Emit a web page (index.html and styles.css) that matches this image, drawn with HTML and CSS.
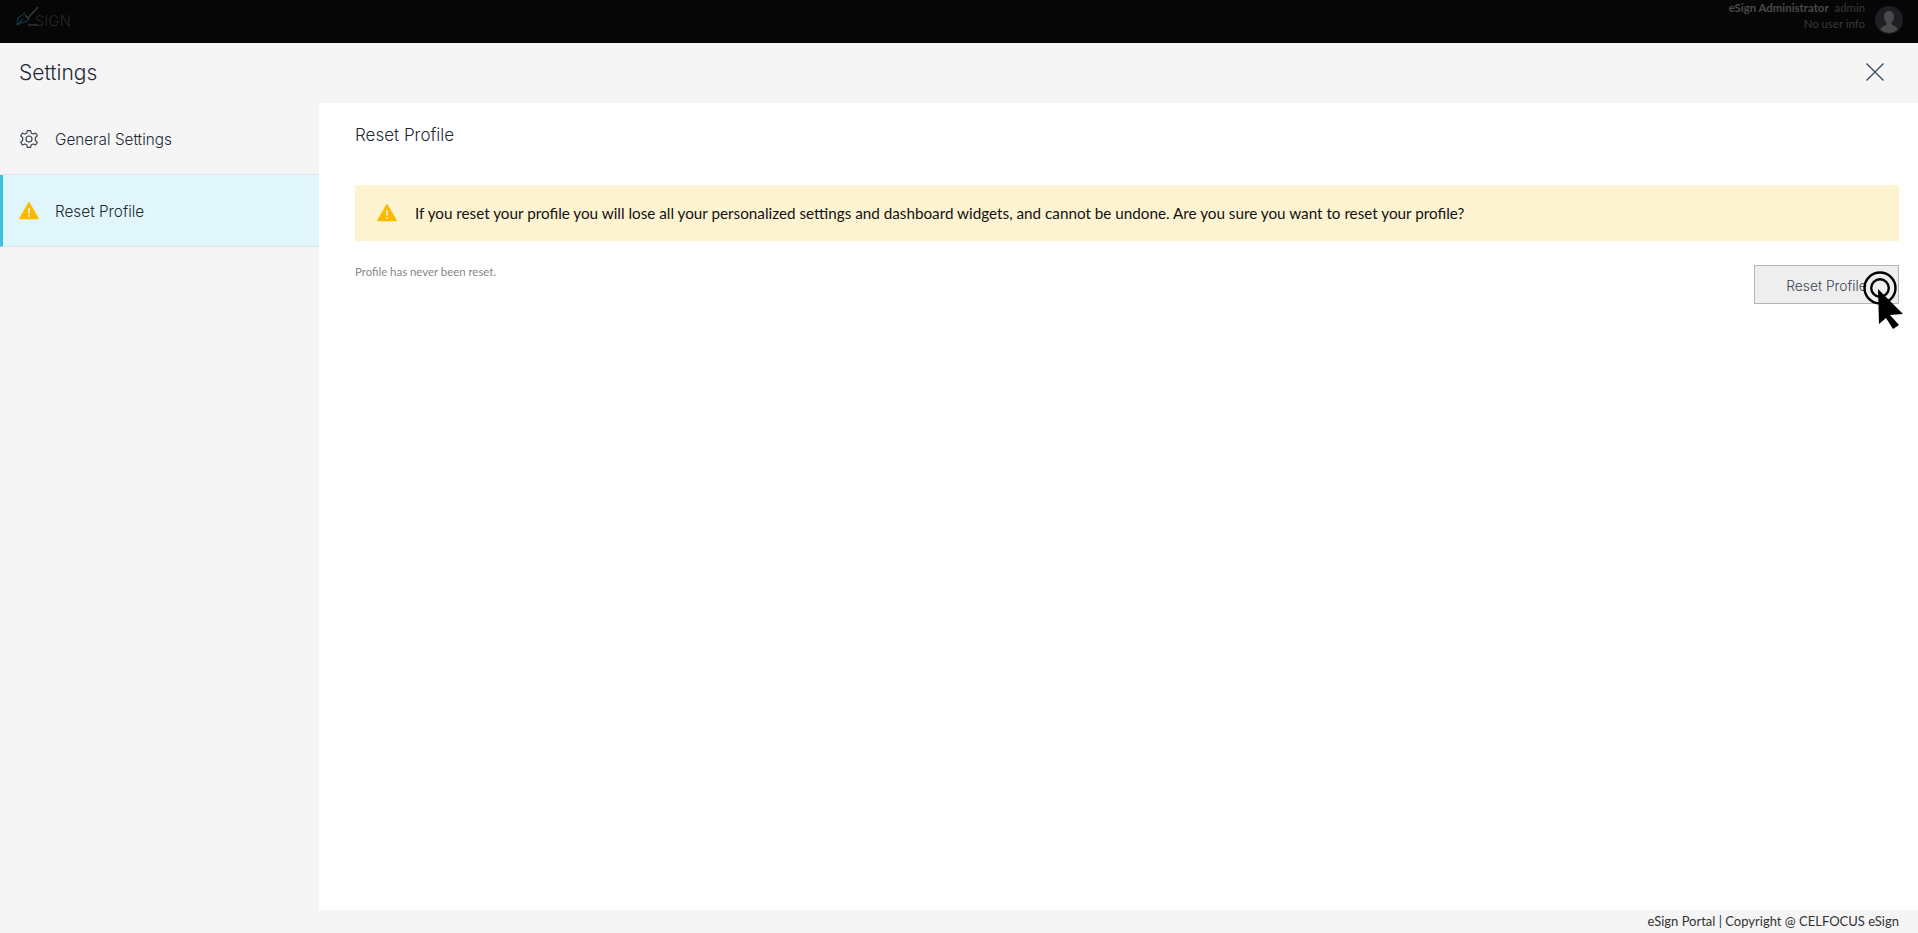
FILE: index.html
```html
<!DOCTYPE html>
<html lang="en">
<head>
    <meta charset="UTF-8">
    <title>Settings</title>
    <link rel="stylesheet" href="styles.css">
</head>
<body>
    <header class="topbar">
        <div class="logo">
            <svg class="logo-mark" width="24" height="22" viewBox="0 0 24 22" fill="none">
                <path d="M2 20 L3 13 L10 8 M2 20 L12 16 L14 13 M2 20 L8 14" stroke="#0f3a45" stroke-width="1.3"/>
                <path d="M10 10 L13 13 L23 2" stroke="#3a3a3a" stroke-width="1.3"/>
                <path d="M13 20 H22" stroke="#3a3a3a" stroke-width="1.3"/>
            </svg>
            <span class="logo-text">SIGN</span>
        </div>
        <div class="user">
            <div class="user-info">
                <div><b>eSign Administrator</b>&nbsp; admin</div>
                <div>No user info</div>
            </div>
            <div class="avatar">
                <svg width="28" height="28" viewBox="0 0 28 28">
                    <circle cx="14" cy="14" r="14" fill="#1e1f22"/>
                    <path d="M14 5 C10.5 5 9 7.5 9 10.5 C9 13.5 10.5 15.5 11.5 16.5 L11.5 18.5 C9.5 20 6 20 5.5 24 A14 14 0 0 0 22.5 24 C22 20 18.5 20 16.5 18.5 L16.5 16.5 C17.5 15.5 19 13.5 19 10.5 C19 7.5 17.5 5 14 5 Z" fill="#4a4a4c"/>
                </svg>
            </div>
        </div>
    </header>

    <div class="settings-head">
        <h1>Settings</h1>
        <svg class="close" width="18" height="18" viewBox="0 0 18 18" fill="none">
            <path d="M0.5 0.5 L17.5 17.5 M17.5 0.5 L0.5 17.5" stroke="#33475b" stroke-width="1.2"/>
        </svg>
    </div>

    <div class="main">
        <nav class="sidebar">
            <a class="nav-item">
                <svg class="nav-icon" width="20" height="20" viewBox="0 0 24 24" fill="none" stroke="#3a4450" stroke-width="1.4" stroke-linejoin="round">
                    <circle cx="12" cy="12" r="3.6"/>
                    <path d="M10 2 H14 L14.7 5 L17.1 6.1 L19.9 4.8 L22 8.2 L19.6 10.2 V13.8 L22 15.8 L19.9 19.2 L17.1 17.9 L14.7 19 L14 22 H10 L9.3 19 L6.9 17.9 L4.1 19.2 L2 15.8 L4.4 13.8 V10.2 L2 8.2 L4.1 4.8 L6.9 6.1 L9.3 5 Z"/>
                </svg>
                <span class="nav-label">General Settings</span>
            </a>
            <a class="nav-item active">
                <svg class="nav-icon" width="20" height="18" viewBox="0 0 20 18">
                    <path d="M10 1 L19 16.5 H1 Z" fill="#fdb900" stroke="#fdb900" stroke-width="1.5" stroke-linejoin="round"/>
                    <path d="M10 6 V11.5 M10 13 V14.8" stroke="#fff" stroke-width="1.5"/>
                </svg>
                <span class="nav-label">Reset Profile</span>
            </a>
        </nav>

        <section class="content">
            <h2>Reset Profile</h2>
            <div class="warning">
                <svg width="20" height="18" viewBox="0 0 20 18">
                    <path d="M10 1 L19 16.5 H1 Z" fill="#fdb900" stroke="#fdb900" stroke-width="1.5" stroke-linejoin="round"/>
                    <path d="M10 6 V11.5 M10 13 V14.8" stroke="#fff" stroke-width="1.5"/>
                </svg>
                <span>If you reset your profile you will lose all your personalized settings and dashboard widgets, and cannot be undone. Are you sure you want to reset your profile?</span>
            </div>
            <div class="actions">
                <p class="note">Profile has never been reset.</p>
                <div class="button-wrap">
                    <button class="reset-btn">Reset Profile</button>
                    <svg class="pointer" width="46" height="62" viewBox="0 0 46 62" fill="none">
                        <circle cx="20" cy="18" r="15.5" stroke="#000" stroke-width="2.4"/>
                        <circle cx="20" cy="18" r="8.8" stroke="#000" stroke-width="2.4"/>
                        <path d="M18 19 L43 44 L30 45 L39 55 L33 59 L26 48 L19 54 Z" fill="#000"/>
                    </svg>
                </div>
            </div>
        </section>
    </div>

    <footer class="footer">eSign Portal | Copyright @ CELFOCUS eSign</footer>
</body>
</html>
```

FILE: styles.css
```css
html, body {
    height: 100%;
}
body {
    margin: 0;
    display: flex;
    flex-direction: column;
    height: 933px;
    overflow: hidden;
    background-color: #f5f5f5;
    font-family: "Lato", "Noto Sans", sans-serif;
    color: #1f2a36;
}
.topbar {
    height: 43px;
    flex: none;
    background: #060606;
    display: flex;
    justify-content: space-between;
    padding: 0 15px;
}
.logo {
    display: flex;
    align-items: flex-end;
    height: 27px;
    margin-top: 5px;
}
.logo-mark {
    align-self: flex-start;
}
.logo-text {
    font-family: "Inter", sans-serif;
    font-weight: 200;
    font-size: 14.5px;
    line-height: 18px;
    letter-spacing: 0.4px;
    color: #3d3d3d;
    margin-left: -4px;
    margin-bottom: 2px;
}
.user {
    display: flex;
    align-items: flex-start;
    gap: 10px;
}
.user-info {
    text-align: right;
    font-size: 11.4px;
    line-height: 16px;
    color: #3a3a3a;
}
.user-info b {
    font-weight: 700;
    color: #4a4a4a;
}
.avatar {
    height: 28px;
    margin-top: 6px;
}
.settings-head {
    height: 60px;
    flex: none;
    display: flex;
    justify-content: space-between;
    align-items: center;
    padding: 0 34px 2px 19px;
    box-sizing: border-box;
}
.settings-head h1 {
    margin: 0;
    font-family: "Inter", sans-serif;
    font-weight: 300;
    font-size: 21px;
}
.main {
    flex: 1;
    display: flex;
    min-height: 0;
}
.sidebar {
    width: 319px;
    flex: none;
}
.nav-item {
    height: 71px;
    display: flex;
    align-items: center;
    gap: 16px;
    padding-left: 19px;
    font-family: "Inter", sans-serif;
    font-weight: 300;
    font-size: 15.3px;
    border-bottom: 1px solid #e0e2e5;
}
.nav-label {
    padding-top: 2px;
}
.nav-item.active {
    background: #e0f6fa;
    border-left: 3px solid #3fc1d9;
    padding-left: 16px;
}
.nav-icon {
    flex: none;
}
.content {
    flex: 1;
    background: #fff;
    padding: 0 19px 0 36px;
}
.content h2 {
    margin: 21px 0 0;
    font-family: "Inter", sans-serif;
    font-weight: 300;
    font-size: 17px;
    line-height: 22px;
}
.warning {
    margin-top: 39px;
    height: 56px;
    background: #fef3d1;
    display: flex;
    align-items: center;
    gap: 18px;
    padding-left: 22px;
    font-size: 15.25px;
    color: #111;
}
.actions {
    display: flex;
    justify-content: space-between;
    margin-top: 24px;
}
.note {
    margin: -1px 0 0;
    font-size: 11.4px;
    line-height: 16px;
    color: #84878a;
}
.button-wrap {
    position: relative;
}
.reset-btn {
    display: block;
    width: 145px;
    height: 39px;
    padding: 2px 0 0;
    background: #eeeeee;
    border: 1px solid #b4b4b4;
    font-family: "Inter", sans-serif;
    font-weight: 300;
    font-size: 13.8px;
    color: #3a4450;
}
.pointer {
    position: absolute;
    left: 106px;
    top: 5px;
}
.footer {
    height: 23px;
    flex: none;
    text-align: right;
    padding-right: 19px;
    font-size: 13px;
    line-height: 23px;
    color: #333;
}
```
